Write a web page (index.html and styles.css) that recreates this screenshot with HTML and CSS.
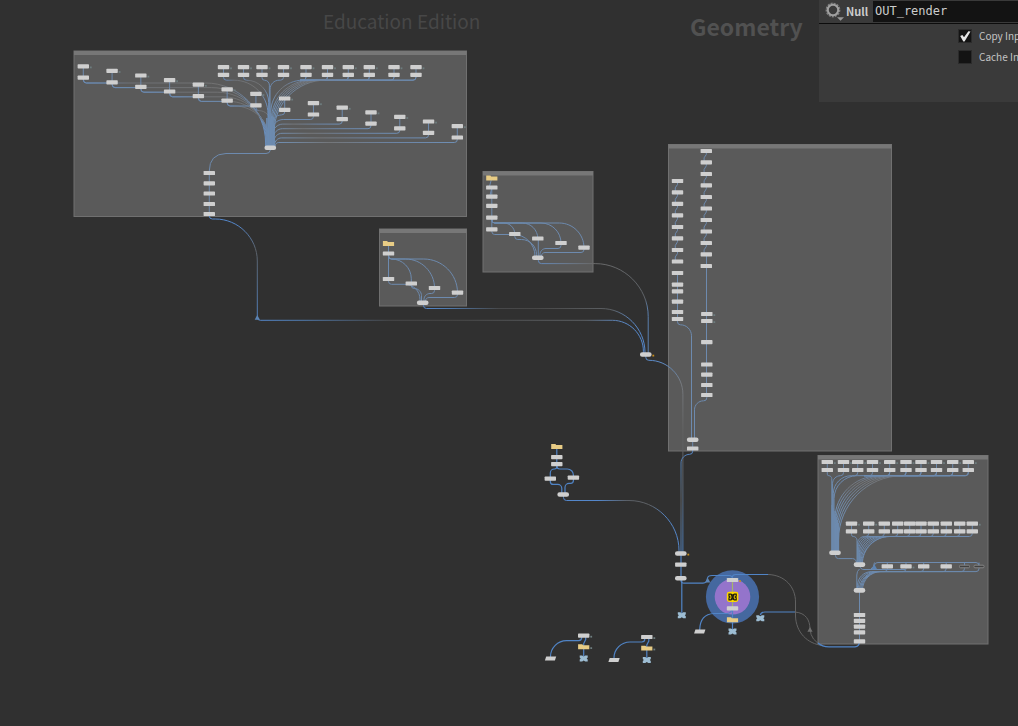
FILE: index.html
```html
<!DOCTYPE html>
<html lang="en">
<head>
<meta charset="utf-8">
<title>Network editor</title>
<link rel="stylesheet" href="styles.css">
</head>
<body>
<main class="editor">
  <svg class="graph" id="graph" role="img" aria-label="Node network">
    <defs>
      <linearGradient id="fade" x1="0" y1="0" x2="1" y2="0">
        <stop offset="0" stop-color="#6389bb"/><stop offset=".25" stop-color="#6d7075"/>
        <stop offset=".75" stop-color="#727272"/><stop offset="1" stop-color="#6a8fbe"/>
      </linearGradient>
      <linearGradient id="fadeLeft" x1="0" y1="0" x2="1" y2="0">
        <stop offset="0" stop-color="#6f8fb5"/><stop offset=".3" stop-color="#747679"/>
        <stop offset=".65" stop-color="#6b84a5"/><stop offset="1" stop-color="#6f8fb5"/>
      </linearGradient>
      <linearGradient id="long" x1="0" y1="0" x2="1" y2="0">
        <stop offset="0" stop-color="#5487cb"/><stop offset=".12" stop-color="#4f79ac"/>
        <stop offset=".34" stop-color="#47484a"/><stop offset=".5" stop-color="#474747"/>
        <stop offset=".85" stop-color="#5c6064"/>
        <stop offset=".95" stop-color="#5b8ac8"/><stop offset="1" stop-color="#5487cb"/>
      </linearGradient>
      <linearGradient id="bend" x1="0" y1="0" x2="1" y2="0">
        <stop offset="0" stop-color="#6389bb"/><stop offset=".25" stop-color="#6b7c92"/>
        <stop offset=".5" stop-color="#6a6a6a"/>
        <stop offset=".97" stop-color="#5e6267"/><stop offset="1" stop-color="#5a80b0"/>
      </linearGradient>
      <linearGradient id="side" x1="0" y1="0" x2="1" y2="0">
        <stop offset="0" stop-color="#5487cb"/><stop offset=".3" stop-color="#5487cb"/>
        <stop offset=".55" stop-color="#5a5f66"/><stop offset=".75" stop-color="#5f6266"/>
        <stop offset=".88" stop-color="#5483c0"/><stop offset="1" stop-color="#5487cb"/>
      </linearGradient>
      <linearGradient id="drop" x1="0" y1="0" x2="0" y2="1">
        <stop offset="0" stop-color="#5487cb"/><stop offset=".04" stop-color="#5f8cc6"/>
        <stop offset=".14" stop-color="#777b80"/>
        <stop offset=".4" stop-color="#606060"/><stop offset=".6" stop-color="#5c6167"/>
        <stop offset="1" stop-color="#4a7ab4"/>
      </linearGradient>
      <linearGradient id="dropIn" x1="0" y1="0" x2="0" y2="1">
        <stop offset="0" stop-color="#5487cb"/><stop offset=".2" stop-color="#55789f"/>
        <stop offset=".5" stop-color="#5f6265"/><stop offset="1" stop-color="#5180b8"/>
      </linearGradient>
      <linearGradient id="sweep" x1="0" y1="0" x2="0" y2="1">
        <stop offset="0" stop-color="#5487cb"/><stop offset=".1" stop-color="#5487cb"/>
        <stop offset=".35" stop-color="#5c6269"/>
        <stop offset=".6" stop-color="#566c87"/><stop offset="1" stop-color="#5180be"/>
      </linearGradient>
      <rect id="node" x="-5.7" y="-2.1" width="11.4" height="4.2" rx=".7"/>
      <rect id="merge" x="-5.8" y="-2.3" width="11.6" height="4.6" rx="2.1"/>
      <path id="folder" d="M-5.6 2.2V-2.7H-1.4L-.6-1.8H5.6V2.2Z"/>
      <path id="file" d="M-4.3-2H5.7L4.4 2H-5.6Z"/>
      <path id="cross" d="M-4-3H-1.5L0-2 1.5-3H4V-1L3 0 4 1V3H1.5L0 2-1.5 3H-4V1L-3 0-4-1Z"/>
      <path id="arrow" d="M0-3L2.6 1.8H-2.6Z"/>
    </defs>
    <g id="boxes"></g>
    <g>
      <circle class="ring-outer" cx="732.5" cy="596.8" r="26.6"/>
      <circle class="ring-inner" cx="732.5" cy="596.8" r="17.8"/>
    </g>
    <g id="wires" class="wires"></g>
    <g id="nodes"></g>
    <g>
      <rect class="selected" x="726.8" y="591.8" width="11.6" height="10.2" rx="2.4"/>
      <path class="selected-mark" d="M729 594.2h2l1.6 1 1.6-1h2v2l-1 .8 1 .8v2h-2l-1.6-1-1.6 1h-2v-2l1-.8-1-.8zM731 595.4l3.2 3.2M734.2 595.4l-3.2 3.2"/>
    </g>
  </svg>

  <h2 class="edition">Education Edition</h2>
  <h1 class="context">Geometry</h1>

  <section class="params">
    <div class="params-head">
      <button class="node-menu" type="button" aria-label="Node menu">
        <svg width="20" height="20" viewBox="0 0 20 20">
          <circle class="gear-teeth" cx="9" cy="9" r="6.4"/>
          <circle class="gear-ring" cx="9" cy="9" r="5.2"/>
          <path class="gear-caret" d="M13 16.2h7l-3.5 3.5z"/>
        </svg>
      </button>
      <label class="node-type" for="name">Null</label>
      <input class="node-name" id="name" type="text" value="OUT_render" spellcheck="false">
    </div>
    <div class="params-body">
      <label class="toggle"><input type="checkbox" checked>Copy Inp</label>
      <label class="toggle"><input type="checkbox">Cache In</label>
    </div>
  </section>
</main>
<script src="graph.js"></script>
</body>
</html>
```

FILE: styles.css
```css
* { box-sizing: border-box; }
body {
  margin: 0;
  background: #303030;
  font-family: "Noto Sans CJK SC", "Noto Sans", sans-serif;
}
.editor {
  position: relative;
  min-height: 100vh;
  overflow: hidden;
  display: grid;
}
.graph { display: block; width: 100%; height: 100%; }

.edition, .context { position: absolute; margin: 0; white-space: nowrap; }
.edition { left: 323px; top: 6px; font-size: 19px; line-height: 30px; font-weight: 400; color: #474747; }
.context { left: 690px; top: 8px; font-size: 23px; line-height: 36px; font-weight: 700; color: #515151; }

.box { fill: #5a5a5a; stroke: #707070; stroke-width: 1; }
.box-head { fill: #777; }
.ring-outer { fill: #45689f; }
.ring-inner { fill: #9474cb; }

.wires { fill: none; stroke-width: 1; }
.w { stroke: #6d8aae; }
.o { stroke: #5084c6; stroke-width: 1.2; }
.g { stroke: #626262; }
.green { stroke: #a5b56a; stroke-width: 1.2; }
.fade { stroke: url(#fade); }
.fadeLeft { stroke: url(#fadeLeft); }
.long { stroke: url(#long); }
.bend { stroke: url(#bend); }
.side { stroke: url(#side); }
.drop { stroke: url(#drop); }
.dropIn { stroke: url(#dropIn); }
.sweep { stroke: url(#sweep); }

.node, .merge, .file { fill: #cfcfcf; }
.folder { fill: #e8cc85; }
.cross { fill: #9dbdd3; }
.arrow { fill: #5c84b4; }
.arrow-grey { fill: #707070; }
.bypass { fill: #404040; stroke: #858585; stroke-width: 1; }
.flag { fill: #6d7c7e; }
.warn { fill: #c98e1c; }
.selected { fill: #ffd800; }
.selected-mark { fill: none; stroke: #1c1a10; stroke-width: 1.2; }

.params {
  position: absolute;
  top: 0;
  right: 0;
  width: 199px;
  padding-bottom: 35px;
  overflow: hidden;
  background: #3a3a3a;
}
.params-head {
  display: flex;
  align-items: center;
  height: 24px;
  padding: 0 0 1px 5px;
  border-bottom: 1px solid #0c0c0c;
}
.node-menu { width: 20px; height: 20px; padding: 0; border: 0; background: none; }
.node-menu svg { display: block; }
.gear-teeth { fill: none; stroke: #808080; stroke-width: 2; stroke-dasharray: 2 1; }
.gear-ring { fill: none; stroke: #a0a0a0; stroke-width: 2; }
.gear-caret { fill: #999; }
.node-type { width: 29px; padding-left: 2px; font-size: 11px; line-height: 20px; font-weight: 700; color: #ccc; }
.node-name {
  flex: 1;
  min-width: 0;
  height: 21px;
  padding: 0 2px;
  border: 0;
  background: #131313;
  color: #ccc;
  font: 12px/20px "DejaVu Sans Mono", monospace;
}
.params-body { display: grid; gap: 1px; padding: 2px 0 0 139px; }
.toggle {
  display: flex;
  align-items: center;
  gap: 7px;
  height: 20px;
  font-size: 10px;
  line-height: 20px;
  color: #c4c4c4;
  white-space: nowrap;
}
.toggle input {
  flex: none;
  appearance: none;
  width: 14px;
  height: 14px;
  margin: 0;
  border: 1px solid #2b2b2b;
  background: #131313;
}
.toggle input:checked::before {
  content: "";
  display: block;
  width: 12px;
  height: 12px;
  background: #e4e4e4;
  clip-path: polygon(10% 50%, 28% 42%, 42% 60%, 78% 10%, 96% 12%, 46% 96%, 36% 96%);
}
```

FILE: graph.js
```js
const SVG = "http://www.w3.org/2000/svg";
const layer = (id) => document.getElementById(id);

function add(parent, tag, attrs) {
  const el = document.createElementNS(SVG, tag);
  for (const key in attrs) el.setAttribute(key, attrs[key]);
  layer(parent).appendChild(el);
}

function box(x, y, w, h) {
  add("boxes", "rect", { class: "box", x, y, width: w, height: h });
  add("boxes", "rect", { class: "box-head", x, y, width: w, height: 4 });
}

function put(type, x, y, flag) {
  add("nodes", "use", { href: "#" + type, class: type, x, y });
  if (flag) add("nodes", "rect", { class: flag, x: x + 6.6, y: y + 0.2, width: 1.8, height: 1.8 });
}

const line = (d, cls = "w") => add("wires", "path", { d, class: cls });

// Down from the output, along a horizontal run, round a wide bend, down to the input.
function route(x1, y1, run, x2, y2, bend, cls = "w") {
  const s = x2 > x1 ? 1 : -1;
  const r = Math.min(3, Math.abs(x2 - x1) / 3);
  const b = Math.min(bend, Math.abs(x2 - x1) - r, y2 - run);
  line(`M${x1} ${y1}V${run - r}Q${x1} ${run} ${x1 + s * r} ${run}H${x2 - s * b}` +
    `C${x2 - s * b * 0.45} ${run} ${x2} ${run + b * 0.45} ${x2} ${run + b}V${y2}`, cls);
}

function column(x, ys) {
  line(`M${x} ${ys[0]}V${ys[ys.length - 1]}`);
  ys.forEach((y) => put("node", x, y));
}

box(74, 51, 392.5, 165.5);
box(379.5, 229, 87, 77);
box(483, 171.5, 110, 100.5);
box(668.5, 144.5, 223, 306.5);
box(818, 455.5, 170, 188.5);

// Descending pairs feeding the first merge
for (let i = 0; i < 14; i++) {
  const x = 83.3 + 28.77 * i;
  const top = 66.3 + 4.6 * i;
  const low = top + 11.4;
  line(`M${x} ${top}V${low}`);
  if (i < 7) route(x, low, low + 5.3, 265.6 + i * 0.8, 146, 60 - i * 5, "fade");
  else route(x, low, low + 5, 271.6 + (i - 7) * 0.6, 146, 12 - (i - 7), i > 8 ? "fadeLeft" : "w");
  put("node", x, top, "flag");
  put("node", x, low);
}
for (let i = 0; i < 6; i++) {
  const x = 83.3 + 28.77 * i;
  const y = 83 + 4.6 * i;
  line(`M${x} ${y - 4}Q${x} ${y} ${x + 3} ${y}H${x + 24}`);
}

[223.5, 243.5, 262, 283.5, 306, 327.5, 348.3, 369.3, 394, 416].forEach((x, i) => {
  line(`M${x} 67V75`);
  route(x, 75, 80.2, 268 + i * 0.7, 146, i < 2 ? 34 : i < 4 ? 9 : 24 + i * 3, i < 2 ? "fade" : i < 4 ? "w" : "fadeLeft");
  if (i > 3) line(`M${x} 75V77Q${x} 80.2 ${x - 3} 80.2H300`);
  put("node", x, 67.2, "flag");
  put("node", x, 74.8);
});
for (let i = 0; i < 7; i++) line(`M${266.6 + i * 1.2} 118V146`);
put("merge", 270.3, 147.7);
line("M270.3 150Q270 153.5 266 153.5H226Q209.3 154 209.3 171");
column(209.3, [173, 183.3, 193.5, 204, 214]);
route(209.3, 214, 219, 257.3, 318, 42, "sweep");
route(257.3, 318, 320.3, 643.4, 353, 31, "long");
put("arrow", 257.3, 318);

// Small fan-out network
[[411.3, 283.5, 20], [434.5, 288, 29], [457.5, 292.7, 34]].forEach(([x, y, r]) => {
  route(388.5, 253, 259, x, y, r);
  put("node", x, y);
});
line("M388.5 244V279");
route(388.5, 279, 284.3, 420, 301, 15);
route(411.3, 283.5, 288.5, 421.5, 301, 9);
route(434.5, 288, 293.5, 424, 301, 6);
route(457.5, 292.7, 297.5, 425.5, 301, 4);
put("folder", 388.5, 243.8);
put("node", 388.5, 253.5);
put("node", 388.5, 279);
put("merge", 422.7, 302.7);
route(423.5, 303, 308.5, 645, 353, 44, "long");

// Larger fan-out network
[[514.8, 234, 12], [537.8, 238.5, 16], [561, 243, 20], [584, 247.7, 25]].forEach(([x, y, r]) => {
  route(491.8, 218, 223, x, y, r);
  put("node", x, y);
});
route(491.8, 229.3, 234.5, 535, 256, 22);
route(514.8, 234, 239.5, 536.5, 256, 15);
line("M538.3 239V256");
route(561, 243, 248.5, 540, 256, 6);
route(584, 247.7, 252.5, 541.5, 256, 4);
column(491.8, [187.5, 196.7, 205.8, 217.7, 229.3]);
line("M491.8 178L489.6 186M491.8 188L489.8 196");
put("folder", 491.8, 178.3);
put("merge", 537.8, 257.8);
route(538.4, 258, 263.6, 648.2, 353, 53, "bend");
put("merge", 645.8, 354.5, "warn");

// Long chains
const right = [151, 162.3, 174, 185.3, 197, 208.5, 220, 231.5, 243, 254.3, 266];
const left = [181, 192.3, 203.8, 215.3, 227, 238.3, 250, 261.5];
const zigzag = (x, ys) => ys.slice(1).forEach((y, i) => {
  line(`M${x} ${ys[i]}V${ys[i] + 3.5}L${x - 2.2} ${y - 4.5}V${y}`);
});
zigzag(706.3, right.slice(0, 10));
zigzag(677.5, left);
line("M706.5 254V395");
right.forEach((y) => put("node", 706.3, y));
left.forEach((y) => put("node", 677.5, y));
[314, 321].forEach((y) => put("node", 706.8, y, "flag"));
[342.2, 364.5, 374.7, 385, 395].forEach((y) => put("node", 706.8, y));
column(677.5, [273, 284.7, 291.3, 301.7, 312, 319]);
route(677.5, 319, 324.8, 691.5, 439, 11);
route(706.8, 395, 400.8, 694.5, 439, 9);
route(645.8, 355, 360.3, 682.9, 552, 34, "drop");
line("M692.7 440V449");
put("merge", 692.7, 439.7);
put("node", 692.7, 448.5);
route(692.7, 449, 454.3, 681, 552, 9, "dropIn");

// Side branch
route(556.8, 464, 469, 550.3, 478, 4, "o");
route(556.8, 464, 469, 573.4, 477, 6, "o");
route(550.3, 479, 484.4, 561.8, 494, 4, "o");
route(573.4, 478, 483.4, 565, 494, 4, "o");
line("M556.8 447V464", "o");
put("folder", 556.8, 446.8);
put("node", 556.8, 457.2);
put("node", 556.8, 464.2);
put("node", 550.3, 478.7);
put("node", 573.4, 477.7);
put("merge", 563.2, 494.5);
route(563.5, 495, 500.5, 679, 553, 50, "side");
line("M681 553V579M681.8 580V613", "o");
put("merge", 680.8, 553.5, "warn");
put("node", 680.8, 564.7);
put("merge", 680.8, 578.3);
put("cross", 681.8, 615.2);
line("M681 580Q681 583.2 684 583.2H703Q707 583 707.5 578Q708 575.5 712 575.5H729Q732.5 575.5 732.5 579", "o");
put("arrow", 707.7, 580.8);

// Selected node and its neighbours
line("M732.5 580V608", "green");
line("M732.5 608V630M731.5 610Q731 613 727 613.5H714Q700 614 699.7 630", "o");
put("node", 732.5, 580, "warn");
put("node", 732.5, 608.4);
put("folder", 732.5, 620);
put("cross", 732.5, 631.5);
put("file", 699.7, 631.5);
line("M732.5 577Q732.5 574.5 736 574.5H768", "o");
line("M768 574.5C785 575 795.5 587 795.5 602V616C796 632 807 644 823 645.5", "g");
line("M760.3 615Q761 612 765 612H795", "o");
line("M795 612C806 613 809.8 620 810 629Q811 641 822 645", "g");
add("nodes", "use", { href: "#arrow", class: "arrow-grey", x: 810, y: 630 });
put("cross", 760.3, 618.2);
line("M818 643Q822 646.8 829 646.8H855Q859.5 646.8 859.5 641", "o");

// Render passes
[827.3, 843.5, 857.7, 872.5, 889.7, 906, 921, 936.5, 952.7, 968.3].forEach((x, i) => {
  line(`M${x} 462V470`);
  route(x, 470, 475.7, 831.8 + i * 0.75, 552, i < 4 ? 8 + i * 5 : 28 + i * 4, i < 4 ? "w" : "fadeLeft");
  if (i > 3) line(`M${x} 470V473Q${x} 475.7 ${x - 3} 475.7H864`);
  put("node", x, 462, "flag");
  put("node", x, 470);
});
for (let i = 0; i < 7; i++) line(`M${832 + i * 1.1} ${505 + i * 3}V552`);
put("merge", 835, 552.8);
route(835.5, 553, 558.6, 856.5, 564, 4);

[851.5, 868.7, 884.3, 897.7, 909.7, 921, 933.3, 946.3, 959.7, 972.3].forEach((x, i) => {
  line(`M${x} 524V531`);
  route(x, 531, 536.5, 857 + i * 0.6, 564, 4 + i * 3);
  put("node", x, 523.6, i < 2 || i === 9 ? "flag" : "");
  put("node", x, 531.3);
});

line("M859.5 565Q860 569.5 864 569.5H871Q874 569 874.5 565Q875 562.5 878 562.5H976Q979 562.5 979 566");
line("M864 569.5H905M871 569Q874 567 874.5 562.5");
put("arrow", 874.5, 567.5);
[887.3, 906, 923.7, 946.2, 964.5, 979].forEach((x, i) => {
  line(`M${x} 562.5V566`);
  route(x, 566, 571.6, 857.5 + i, 590, 14 + i * 2);
  if (i < 4) put("node", x, 566.4, i === 1 ? "flag" : "");
  else add("nodes", "rect", { class: "bypass", x: x - 5, y: 565.2, width: 10, height: 2.6, rx: 1 });
});
line("M859.5 569Q856.8 571 856.8 575V590");
line("M859.5 590V641");
[615, 620.8, 626.6, 632.4, 641.4].forEach((y) => put("node", 859.5, y));
put("merge", 859.5, 564.6);
put("merge", 859.5, 590.4);

// Detached output pairs
[[583.7, 635.6, 550.5], [646.8, 637, 614]].forEach(([x, y, fx]) => {
  route(x - 2, y, y + 5, fx, y + 22, 16, "o");
  line(`M${x + 2} ${y}V${y + 4}L${x} ${y + 8}V${y + 21}`, "o");
  put("node", x, y, "flag");
  put("folder", x, y + 11.4, "flag");
  put("cross", x, y + 23);
  put("file", fx, y + 23);
});
```
